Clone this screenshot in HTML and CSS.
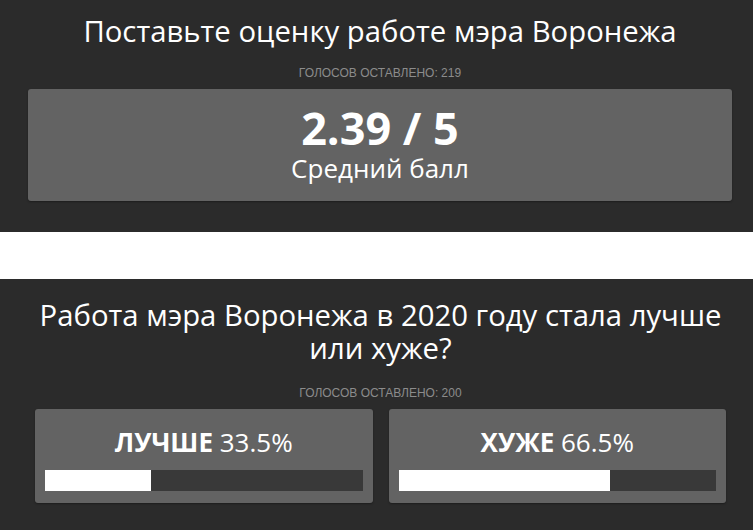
FILE: index.html
```html
<!DOCTYPE html>
<html lang="ru">
<head>
<meta charset="utf-8">
<title>Оценка работы мэра Воронежа</title>
<link rel="stylesheet" href="styles.css">
</head>
<body>
<section class="block block-rating">
  <h1 class="title">Поставьте оценку работе мэра Воронежа</h1>
  <p class="votes">ГОЛОСОВ ОСТАВЛЕНО: 219</p>
  <div class="card score">
    <div class="score-value">2.39 / 5</div>
    <div class="score-label">Средний балл</div>
  </div>
</section>
<div class="spacer"></div>
<section class="block block-poll">
  <h2 class="title">Работа мэра Воронежа в 2020 году стала лучше или хуже?</h2>
  <p class="votes">ГОЛОСОВ ОСТАВЛЕНО: 200</p>
  <div class="options">
    <div class="card option">
      <div class="option-label"><b>ЛУЧШЕ</b> 33.5%</div>
      <div class="bar"><div class="fill" style="width:33.5%"></div></div>
    </div>
    <div class="card option">
      <div class="option-label"><b>ХУЖЕ</b> 66.5%</div>
      <div class="bar"><div class="fill" style="width:66.5%"></div></div>
    </div>
  </div>
</section>
</body>
</html>
```
FILE: styles.css
```css
* { box-sizing: border-box; }
html, body { margin: 0; padding: 0; }
body {
  background: #ffffff;
  font-family: "Open Sans", "Noto Sans", sans-serif;
  color: #ffffff;
}
.block {
  background: #2b2b2b;
  display: flex;
  flex-direction: column;
}
.block-rating {
  height: 232px;
  padding: 13px 21px 0 28px;
}
.block-poll {
  height: 251px;
  padding: 20px 27px 0 35px;
}
.spacer { height: 47px; }
.title {
  margin: 0 0 17px;
  font-size: 29.3px;
  line-height: 36px;
  font-weight: 400;
  text-align: center;
}
.block-poll .title {
  line-height: 33px;
  margin-bottom: 21px;
}
.votes {
  margin: 0 0 9px;
  font-family: "Liberation Sans", Arial, sans-serif;
  font-size: 12px;
  line-height: 14px;
  color: #8c8c8c;
  text-align: center;
}
.card {
  background: #636363;
  border-radius: 3px;
  box-shadow: 0 1px 2px rgba(0, 0, 0, 0.35);
}
.score {
  height: 112px;
  padding: 14px 0 0;
  text-align: center;
}
.score-value {
  font-size: 45px;
  font-weight: 700;
  line-height: 50px;
}
.score-label {
  font-size: 26px;
  line-height: 30px;
}
.options {
  display: grid;
  grid-template-columns: 1fr 1fr;
  gap: 16px;
}
.option {
  height: 94px;
  padding: 18px 10px 0;
  display: flex;
  flex-direction: column;
}
.option-label {
  font-size: 26px;
  line-height: 30px;
  text-align: center;
  margin-bottom: 13px;
}
.option-label b { font-weight: 700; }
.bar {
  height: 21px;
  background: #393939;
}
.fill {
  height: 100%;
  background: #ffffff;
}
```
